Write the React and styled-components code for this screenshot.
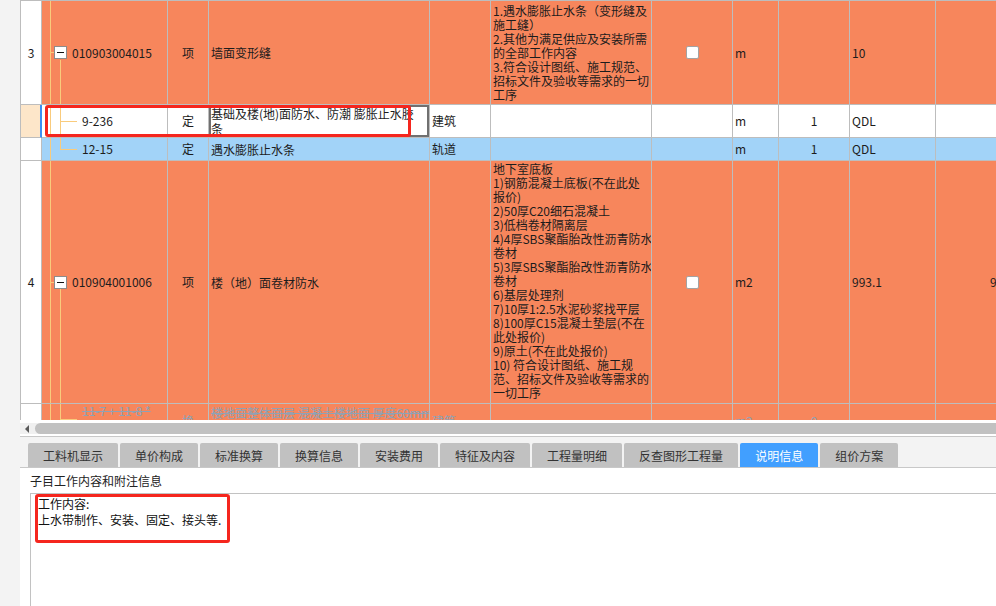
import React from "react";
import styled, { createGlobalStyle } from "styled-components";

const GRID = "#bdbdbd";
const TREE = "#f9cb7c";
const TONES = { orange: "#f7865c", white: "#ffffff", blue: "#a2d3f8" };
const COLS = "21px 126px 41px 221px 61px 161px 81px 46px 71px 86px 88px";

const GlobalStyle = createGlobalStyle`
  html, body { margin: 0; padding: 0; background: #f3f3f3; overflow: hidden; }
  #root { width: 996px; height: 606px; }
`;

const Page = styled.div`
  width: 996px;
  height: 606px;
  box-sizing: border-box;
  padding-left: 20px;
  display: flex;
  flex-direction: column;
  overflow: hidden;
  font-family: "Noto Sans CJK SC", "Liberation Sans", sans-serif;
`;

const GridViewport = styled.div`
  position: relative;
  flex: none;
  height: 420px;
  box-sizing: border-box;
  border-left: 1px solid ${GRID};
  border-top: 1px solid ${GRID};
  background: #fff;
  overflow: hidden;
`;

const Row = styled.div`
  display: grid;
  grid-template-columns: ${COLS};
  height: ${(p) => p.$h}px;
  background: ${(p) => TONES[p.$tone]};
`;

const Cell = styled.div`
  box-sizing: border-box;
  min-width: 0;
  border-right: 1px solid ${GRID};
  border-bottom: 1px solid ${GRID};
  display: flex;
  align-items: ${(p) => (p.$top ? "flex-start" : "center")};
  justify-content: ${(p) =>
    p.$align === "center" ? "center" : p.$align === "right" ? "flex-end" : "flex-start"};
  padding: 0 ${(p) => (p.$align === "right" ? "3px" : "2px")} 0 2px;
  font-size: 12px;
  line-height: 14px;
  color: ${(p) => (p.$struck ? "#8ea2b6" : "#1c1c1c")};
  text-decoration: ${(p) => (p.$struck ? "line-through" : "none")};
  white-space: nowrap;
  overflow: hidden;
`;

const NumCell = styled(Cell)`
  justify-content: center;
  background: ${(p) => (p.$current ? "#fde6c9" : "#fff")};
  border-right: ${(p) => (p.$current ? "2px solid #3d8ef2" : `1px solid ${GRID}`)};
`;

const seg = (x, y, w, h) => `linear-gradient(${TREE}, ${TREE}) ${x} ${y} / ${w} ${h} no-repeat`;

const BRANCHES = {
  parent: [seg("8px", "0", "1px", "100%"), seg("8px", "50%", "4px", "1px"), seg("18px", "bottom", "1px", "calc(50% - 7px)")],
  child: [seg("8px", "0", "1px", "100%"), seg("18px", "0", "1px", "100%"), seg("18px", "50%", "17px", "1px")],
  last: [seg("8px", "0", "1px", "100%"), seg("18px", "0", "1px", "50%"), seg("18px", "50%", "17px", "1px")],
  lastTop: [seg("8px", "0", "1px", "100%"), seg("18px", "0", "1px", "15px"), seg("18px", "15px", "17px", "1px")],
};

const TreeCell = styled(Cell)`
  background: ${(p) => BRANCHES[p.$branch].join(", ")};
  padding-left: ${(p) => (p.$branch === "parent" ? 12 : 40)}px;
`;

const ExpandBox = styled.span`
  flex: none;
  width: 13px;
  height: 13px;
  box-sizing: border-box;
  border: 1px solid #8c8c8c;
  background: #fff;
  display: flex;
  align-items: center;
  justify-content: center;
  margin-right: 5px;
  &::before {
    content: "";
    width: 7px;
    height: 1px;
    background: #111;
  }
`;

const NameCell = styled(Cell)`
  padding-top: ${(p) => (p.$top ? "1px" : "0")};
  line-height: 15px;
  flex-direction: column;
  justify-content: ${(p) => (p.$top ? "flex-start" : "center")};
  align-items: flex-start;
  box-shadow: ${(p) => (p.$editing ? "inset 0 0 0 2px #707070" : "none")};
`;

const DescCell = styled(Cell)`
  display: block;
  padding-top: ${(p) => p.$pad}px;
  line-height: 14px;
`;

const Line = styled.div`
  white-space: nowrap;
`;

const Check = styled.span`
  width: 13px;
  height: 13px;
  box-sizing: border-box;
  border: 1px solid #a3a3a3;
  border-radius: 2px;
  background: #fff;
`;

const Marker = styled.div`
  position: absolute;
  left: ${(p) => p.$x}px;
  top: ${(p) => p.$y}px;
  width: ${(p) => p.$w}px;
  height: ${(p) => p.$hh}px;
  box-sizing: border-box;
  border: 3px solid #f5261e;
  border-radius: 3px;
  pointer-events: none;
`;

const ScrollArea = styled.div`
  flex: none;
  height: 17px;
  box-sizing: border-box;
  padding-top: 3px;
  background: #fff;
  border-bottom: 1px solid #c8c8c8;
`;

const ScrollTrack = styled.div`
  height: 11px;
  display: flex;
  align-items: center;
  background: #f0f0f0;
`;

const ScrollArrow = styled.span`
  width: 0;
  height: 0;
  margin: 0 5px 0 5px;
  border-right: 4px solid #5a5a5a;
  border-top: 4px solid transparent;
  border-bottom: 4px solid transparent;
`;

const ScrollThumb = styled.div`
  flex: 1;
  height: 11px;
  margin-left: 1px;
  background: #c1c1c1;
  border-radius: 6px 0 0 6px;
`;

const TabStrip = styled.div`
  flex: none;
  display: flex;
  gap: 2px;
  padding: 6px 0 0 8px;
`;

const Tab = styled.div`
  height: 24px;
  padding: 0 15px;
  display: flex;
  align-items: center;
  font-size: 12px;
  color: ${(p) => (p.$active ? "#fff" : "#333")};
  background: ${(p) => (p.$active ? "#419fff" : "#c1c1c1")};
  border-radius: 2px 2px 0 0;
`;

const InfoPanel = styled.div`
  flex: 1;
  display: flex;
  flex-direction: column;
  background: #fff;
  border-top: 1px solid #c8c8c8;
  padding: 5px 0 0 10px;
`;

const InfoLabel = styled.div`
  font-size: 12px;
  line-height: 16px;
  color: #222;
  margin-bottom: 4px;
`;

const InfoBox = styled.div`
  position: relative;
  flex: 1;
  border: 1px solid #c2c2c2;
  border-right: none;
  border-bottom: none;
  padding: 2px 0 0 7px;
  font-size: 12px;
  line-height: 16px;
  color: #111;
`;

const rows = [
  {
    num: "3", tone: "orange", h: 104, branch: "parent", code: "010903004015", type: "项",
    name: ["墙面变形缝"], unit: "",
    desc: ["1.遇水膨胀止水条（变形缝及", "施工缝）", "2.其他为满足供应及安装所需", "的全部工作内容", "3.符合设计图纸、施工规范、", "招标文件及验收等需求的一切", "工序"],
    pad: 3, check: true, measure: "m", qty: "", qdl: "10", last: "",
  },
  {
    num: "", current: true, tone: "white", h: 33, branch: "child", code: "9-236", type: "定",
    name: ["基础及楼(地)面防水、防潮 膨胀止水胶", "条"], top: true, editing: true, unit: "建筑",
    desc: [], measure: "m", qty: "1", qdl: "QDL", last: "",
  },
  {
    num: "", tone: "blue", h: 23, branch: "last", code: "12-15", type: "定",
    name: ["遇水膨胀止水条"], unit: "轨道", desc: [], measure: "m", qty: "1", qdl: "QDL", last: "",
  },
  {
    num: "4", tone: "orange", h: 243, branch: "parent", code: "010904001006", type: "项",
    name: ["楼（地）面卷材防水"], unit: "",
    desc: ["地下室底板", "1)钢筋混凝土底板(不在此处", "报价)", "2)50厚C20细石混凝土", "3)低档卷材隔离层", "4)4厚SBS聚酯胎改性沥青防水", "卷材", "5)3厚SBS聚酯胎改性沥青防水", "卷材", "6)基层处理剂", "7)10厚1:2.5水泥砂浆找平层", "8)100厚C15混凝土垫层(不在", "此处报价)", "9)原土(不在此处报价)", "10) 符合设计图纸、施工规", "范、招标文件及验收等需求的", "一切工序"],
    pad: 1, check: true, measure: "m2", qty: "", qdl: "993.1", last: "993.1",
  },
  {
    num: "", tone: "orange", h: 34, branch: "lastTop", code: "11-7 + 11-8 *", type: "换", struck: true,
    name: ["楼地面整体面层 混凝土楼地面 厚度60mm"], top: true, unit: "建筑",
    desc: [], measure: "m2", qty: "0", qdl: "", last: "",
  },
];

const tabs = ["工料机显示", "单价构成", "标准换算", "换算信息", "安装费用", "特征及内容", "工程量明细", "反查图形工程量", "说明信息", "组价方案"];

function GridRow({ r }) {
  const s = r.struck;
  return (
    <Row $h={r.h} $tone={r.tone}>
      <NumCell $current={r.current}>{r.num}</NumCell>
      <TreeCell $branch={r.branch} $struck={s} $top={s}>
        {r.branch === "parent" && <ExpandBox />}
        {r.code}
      </TreeCell>
      <Cell $align="center" $struck={s}>{r.type}</Cell>
      <NameCell $top={r.top} $editing={r.editing} $struck={s}>
        {r.name.map((n) => (
          <Line key={n}>{n}</Line>
        ))}
      </NameCell>
      <Cell $struck={s}>{r.unit}</Cell>
      <DescCell $pad={r.pad || 0}>
        {r.desc.map((d, i) => (
          <Line key={i}>{d}</Line>
        ))}
      </DescCell>
      <Cell $align="center">{r.check && <Check />}</Cell>
      <Cell $struck={s}>{r.measure}</Cell>
      <Cell $align="center" $struck={s}>{r.qty}</Cell>
      <Cell>{r.qdl}</Cell>
      <Cell $align="right">{r.last}</Cell>
    </Row>
  );
}

export default function App() {
  return (
    <>
      <GlobalStyle />
      <Page>
        <GridViewport>
          {rows.map((r, i) => (
            <GridRow key={i} r={r} />
          ))}
          <Marker $x={24} $y={104} $w={366} $hh={32} />
        </GridViewport>
        <ScrollArea>
          <ScrollTrack>
            <ScrollArrow />
            <ScrollThumb />
          </ScrollTrack>
        </ScrollArea>
        <TabStrip>
          {tabs.map((t) => (
            <Tab key={t} $active={t === "说明信息"}>{t}</Tab>
          ))}
        </TabStrip>
        <InfoPanel>
          <InfoLabel>子目工作内容和附注信息</InfoLabel>
          <InfoBox>
            <div>工作内容:</div>
            <div>上水带制作、安装、固定、接头等.</div>
            <Marker $x={4} $y={0} $w={195} $hh={49} />
          </InfoBox>
        </InfoPanel>
      </Page>
    </>
  );
}
